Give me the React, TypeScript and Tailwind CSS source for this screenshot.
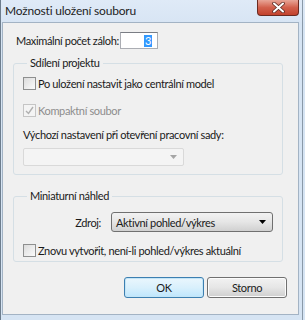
import React from 'react';

const font = { fontFamily: 'Lato, "Liberation Sans", sans-serif', letterSpacing: '-0.35px' };

function Checkbox({ checked, disabled }: { checked?: boolean; disabled?: boolean }) {
  return (
    <span
      className={`relative inline-block w-[13px] h-[13px] shrink-0 border ${
        disabled ? 'border-[#c5c5c5] bg-[#f4f4f4]' : 'border-[#8e8f8f] bg-gradient-to-br from-[#dcdcdc] to-[#fbfbfb]'
      }`}
    >
      {checked && (
        <svg className="absolute inset-0" width="11" height="11" viewBox="0 0 11 11">
          <path d="M2 6 L4.5 8.5 L9 2" fill="none" stroke={disabled ? '#b0b0b0' : '#1d2c4a'} strokeWidth="1.4" />
        </svg>
      )}
    </span>
  );
}

function Legend({ children }: { children: React.ReactNode }) {
  return <legend className="ml-[4px] px-[3px] leading-[14px]">{children}</legend>;
}

export default function App() {
  return (
    <div
      className="relative w-[305px] h-[320px] bg-[#d6e4f3] border-l border-[#6d7d8d] text-[11px] leading-[13px] text-[#1a1a1a] overflow-hidden flex flex-col whitespace-nowrap"
      style={font}
    >
      {/* title bar */}
      <div className="h-[22px] shrink-0 flex items-start justify-between pl-[4px] pr-[6px] bg-gradient-to-b from-[#dfeaf7] to-[#d8e5f4]">
        <span className="mt-[4px] text-[12px] leading-[14px] tracking-[-0.2px] text-[#1e1e1e]">Možnosti uložení souboru</span>
        <div className="w-[42px] h-[16px] rounded-b-[4px] border border-t-0 border-[#6b2a20] bg-gradient-to-b from-[#e8a597] via-[#d2604c] to-[#c2412c] flex items-center justify-center">
          <svg width="13" height="11" viewBox="0 0 13 11">
            <path d="M2 1.5 L11 9.5 M11 1.5 L2 9.5" stroke="#5a2a22" strokeWidth="3.6" strokeLinecap="round" />
            <path d="M2 1.5 L11 9.5 M11 1.5 L2 9.5" stroke="#ffffff" strokeWidth="2" strokeLinecap="round" />
          </svg>
        </div>
      </div>

      {/* client area */}
      <div className="ml-[1px] mr-[6px] h-[293px] shrink-0 border border-[#a3b3c4] bg-[#f0f0f0] flex flex-col">
        <div className="mt-[9px] flex items-center pl-[13px]">
          <span className="w-[104px] shrink-0">Maximální počet záloh:</span>
          <div className="w-[38px] h-[17px] shrink-0 border border-[#abadb3] border-t-[#7a7d84] bg-white flex items-center justify-end pr-[5px]">
            <span className="bg-[#3399ff] text-white leading-[12px] px-[1px]">3</span>
          </div>
        </div>

        <fieldset className="mt-[7px] ml-[10px] w-[270px] h-[119px] border border-[#d5dfe5] rounded-[3px] px-[9px]">
          <Legend>Sdílení projektu</Legend>
          <label className="mt-[7px] flex items-center gap-[2px]">
            <Checkbox />
            <span>Po uložení nastavit jako centrální model</span>
          </label>
          <label className="mt-[14px] flex items-center gap-[2px] text-[#8d8d8d]">
            <Checkbox checked disabled />
            <span>Kompaktní soubor</span>
          </label>
          <div className="mt-[11px]">Výchozí nastavení při otevření pracovní sady:</div>
          <div className="mt-[7px] w-[161px] h-[18px] rounded-[2px] border border-[#d9d9d9] bg-[#f4f4f4] flex items-center justify-end pr-[6px]">
            <svg width="7" height="4" viewBox="0 0 7 4">
              <path d="M0 0 H7 L3.5 4 Z" fill="#a5a5a5" />
            </svg>
          </div>
        </fieldset>

        <fieldset className="mt-[14px] ml-[10px] w-[270px] h-[73px] border border-[#d5dfe5] rounded-[3px] px-[9px]">
          <Legend>Miniaturní náhled</Legend>
          <div className="mt-[9px] flex items-center">
            <span className="w-[88px] text-right pr-[10px]">Zdroj:</span>
            <div className="w-[162px] h-[20px] rounded-[3px] border border-[#707070] bg-gradient-to-b from-[#f2f2f2] via-[#e6e6e6] to-[#d0d0d0] flex items-center justify-between pl-[4px] pr-[6px]">
              <span>Aktivní pohled/výkres</span>
              <svg width="7" height="4" viewBox="0 0 7 4">
                <path d="M0 0 H7 L3.5 4 Z" fill="#000" />
              </svg>
            </div>
          </div>
          <label className="mt-[12px] flex items-center gap-[2px]">
            <Checkbox />
            <span>Znovu vytvořit, není-li pohled/výkres aktuální</span>
          </label>
        </fieldset>

        <div className="mt-[15px] flex justify-end gap-[3px] pr-[11px]">
          <button className="w-[80px] h-[21px] rounded-[3px] border border-[#3c7fb1] bg-gradient-to-b from-[#eaf6fd] via-[#d9f0fc] to-[#bee6fd] shadow-[inset_0_0_0_1px_#c4e5f6]">
            OK
          </button>
          <button className="w-[80px] h-[21px] rounded-[3px] border border-[#707070] bg-gradient-to-b from-[#f2f2f2] via-[#e6e6e6] to-[#cfcfcf] shadow-[inset_0_0_0_1px_#fcfcfc]">
            Storno
          </button>
        </div>
      </div>
      <div className="absolute top-0 bottom-0 right-[2px] w-px bg-[#8a99a8]" />
    </div>
  );
}
